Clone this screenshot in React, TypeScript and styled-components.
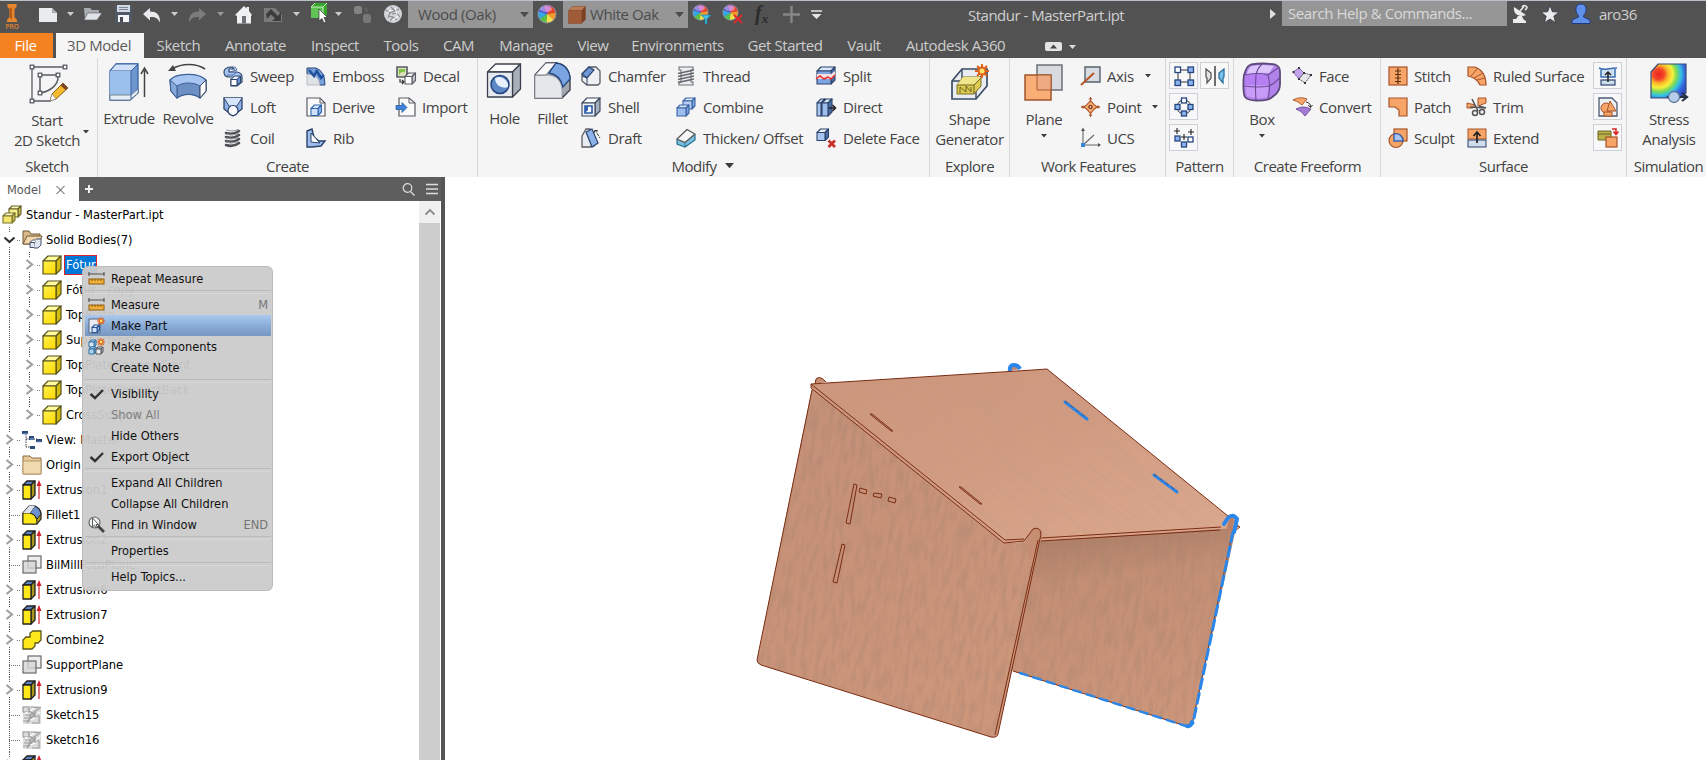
import React from 'react';
import styled, { createGlobalStyle } from 'styled-components';

const Global = createGlobalStyle`
  * { box-sizing: border-box; }
  body { margin: 0; background: #fff; overflow: hidden; }
  svg { display: block; flex: none; overflow: visible; }
`;

const UI_FONT = `'Open Sans', 'Noto Sans', sans-serif`;
const TREE_FONT = `'DejaVu Sans Condensed', 'DejaVu Sans', sans-serif`;

/* ---------- palette ---------- */
const NAVY = '#2c436b';
const SKY = '#a9c6f2';
const MID = '#6f97d6';
const STEEL = '#4d6fa8';
const ORANGE = '#f7a468';
const RUST = '#a8542a';
const GREY = '#585c63';

/* ---------- layout ---------- */
const Window = styled.div`
  width: 1706px;
  height: 760px;
  display: flex;
  flex-direction: column;
  font-family: ${UI_FONT};
  background: #fff;
  overflow: hidden;
`;

const TitleBar = styled.header`
  height: 33px;
  flex: none;
  display: flex;
  align-items: flex-start;
  background: #525252;
  border-top: 1px solid #b9c0ca;
`;

const Slot = styled.div<{ $w: number; $ml?: number; $mt?: number }>`
  flex: none;
  width: ${p => p.$w}px;
  margin-left: ${p => p.$ml ?? 0}px;
  margin-top: ${p => p.$mt ?? 0}px;
`;

const Combo = styled.div<{ $ml: number }>`
  flex: none;
  width: 125px;
  height: 27px;
  margin-left: ${p => p.$ml}px;
  padding: 0 4px 0 5px;
  display: flex;
  align-items: center;
  background: #969696;
  color: #4c4c4c;
  font-size: 15px;
  letter-spacing: -0.4px;
  white-space: nowrap;
`;

const ComboText = styled.span<{ $pl: number }>`
  flex: 1;
  padding-left: ${p => p.$pl}px;
  padding-bottom: 1px;
`;

const DocTitle = styled.div`
  flex: none;
  width: 290px;
  margin-left: 146px;
  margin-top: 3px;
  line-height: 22px;
  font-size: 15px;
  letter-spacing: -0.5px;
  color: #cfcfcf;
  white-space: nowrap;
`;

const SearchBox = styled.div`
  flex: none;
  width: 225px;
  height: 25px;
  margin-left: 6px;
  padding-left: 6px;
  line-height: 24px;
  background: #969696;
  color: #d9d9d9;
  font-size: 15px;
  letter-spacing: -0.42px;
  white-space: nowrap;
`;

const UserName = styled.div`
  margin: 2px 0 0 8px;
  line-height: 22px;
  font-size: 15px;
  letter-spacing: -0.6px;
  color: #cfcfcf;
`;

const TabBar = styled.nav`
  height: 25px;
  flex: none;
  display: flex;
  background: #525252;
`;

const Tab = styled.div<{ $w: number; $kind?: 'file' | 'active' }>`
  flex: none;
  width: ${p => p.$w}px;
  margin-right: ${p => (p.$kind === 'file' ? 3 : 0)}px;
  padding-right: ${p => (p.$kind ? 2 : 0)}px;
  line-height: 25px;
  text-align: center;
  font-size: 15px;
  letter-spacing: -0.4px;
  white-space: nowrap;
  color: ${p => (p.$kind === 'file' ? '#fff' : p.$kind === 'active' ? '#5a5a5a' : '#cdcdcd')};
  background: ${p => (p.$kind === 'file' ? '#f58220' : p.$kind === 'active' ? '#f5f5f5' : 'transparent')};
`;

const Ribbon = styled.section`
  height: 119px;
  flex: none;
  display: flex;
  background: #f5f5f5;
  color: #434343;
  font-size: 15px;
  letter-spacing: -0.39px;
`;

const Group = styled.div<{ $w: number }>`
  flex: none;
  width: ${p => p.$w}px;
  display: flex;
  flex-direction: column;
  border-right: 1px solid #d8d8d8;
  &:last-child { border-right: none; }
`;

const GroupBody = styled.div<{ $pl?: number }>`
  height: 98px;
  display: flex;
  padding-left: ${p => p.$pl ?? 0}px;
`;

const GroupLabel = styled.div<{ $shift?: number }>`
  height: 21px;
  display: flex;
  justify-content: center;
  align-items: center;
  gap: 8px;
  line-height: 20px;
  letter-spacing: -0.5px;
  padding-bottom: 2px;
  padding-left: ${p => Math.max(p.$shift ?? 0, 0)}px;
  padding-right: ${p => Math.max(-(p.$shift ?? 0), 0)}px;
  white-space: nowrap;
`;

const Big = styled.div<{ $w: number }>`
  flex: none;
  width: ${p => p.$w}px;
  padding-top: 4px;
  display: flex;
  flex-direction: column;
  align-items: center;
  text-align: center;
  line-height: 20px;
  white-space: nowrap;
`;

const BigLabel = styled.div<{ $mt?: number }>`
  margin-top: ${p => p.$mt ?? 6}px;
  margin-bottom: 5px;
`;

const BesideArrow = styled.div`
  width: 12px;
  padding-top: 72px;
`;

const Column = styled.div<{ $w: number; $ml?: number }>`
  flex: none;
  width: ${p => p.$w}px;
  margin-left: ${p => p.$ml ?? 0}px;
  padding-top: 2px;
`;

const Command = styled.div<{ $gap?: number }>`
  height: 31px;
  display: flex;
  align-items: center;
  gap: ${p => p.$gap ?? 7}px;
  white-space: nowrap;
`;

const CommandArrow = styled.span<{ $ml: number }>`
  margin-left: ${p => p.$ml}px;
`;

const ToolGrid = styled.div<{ $cols: number; $ml: number }>`
  display: grid;
  grid-template-columns: repeat(${p => p.$cols}, 29px);
  grid-auto-rows: 27px;
  gap: 4px 2px;
  align-content: start;
  padding-top: 4px;
  margin-left: ${p => p.$ml}px;
`;

const Tool = styled.div`
  display: flex;
  align-items: center;
  justify-content: center;
  border: 1px solid #cdd0d6;
  background: #f8f8f9;
`;

const Workspace = styled.main`
  flex: 1;
  min-height: 0;
  display: flex;
`;

const Browser = styled.aside`
  flex: none;
  width: 445px;
  display: flex;
  flex-direction: column;
  border-right: 4px solid #555;
`;

const BrowserHead = styled.div`
  height: 24px;
  flex: none;
  display: flex;
  align-items: center;
  background: #5e5e5e;
`;

const BrowserTab = styled.div`
  width: 79px;
  height: 24px;
  padding-left: 7px;
  display: flex;
  align-items: center;
  gap: 15px;
  background: #fff;
  color: #5a5a5a;
  font: 12.7px ${TREE_FONT};
  font-stretch: condensed;
`;

const HeadTools = styled.div`
  flex: 1;
  display: flex;
  align-items: center;
  justify-content: flex-end;
  gap: 11px;
  padding-right: 2px;
`;

const BrowserBody = styled.div`
  flex: 1;
  min-height: 0;
  display: flex;
  padding-right: 1px;
`;

const Tree = styled.div`
  flex: 1;
  overflow: hidden;
  padding-top: 1px;
  color: #000;
  font: 12.8px ${TREE_FONT};
  font-stretch: condensed;
`;

const TreeRow = styled.div`
  height: 25px;
  display: flex;
  align-items: center;
  white-space: nowrap;
`;

const TreeIcon = styled.span`
  flex: none;
  width: 20px;
  margin-left: 2px;
`;

const TreeText = styled.span<{ $selected?: boolean }>`
  margin-left: 2px;
  padding: 0 0 0 1px;
  border: 1px solid ${p => (p.$selected ? '#e0202c' : 'transparent')};
  background: ${p => (p.$selected ? '#0078d7' : 'transparent')};
  color: ${p => (p.$selected ? '#fff' : '#000')};
  height: 20px;
  line-height: 18px;
`;

const ScrollBar = styled.div`
  flex: none;
  width: 21px;
  display: flex;
  flex-direction: column;
  background: #cdcdcd;
`;

const ScrollUp = styled.div`
  height: 22px;
  display: flex;
  align-items: center;
  justify-content: center;
  background: #f0f0f0;
`;

const Canvas = styled.div`
  flex: 1;
  background: #fff;
  overflow: hidden;
`;

const Menu = styled.div`
  position: absolute;
  left: 82px;
  top: 266px;
  width: 191px;
  padding: 1px 1px 3px 2px;
  border: 1px solid rgba(184, 184, 184, 0.9);
  border-radius: 6px;
  background: rgba(203, 203, 203, 0.95);
  font: 12.7px ${TREE_FONT};
  font-stretch: condensed;
`;

const MenuItem = styled.div<{ $hot?: boolean; $off?: boolean }>`
  height: 21px;
  padding: 0 3px 0 3px;
  display: flex;
  align-items: center;
  color: ${p => (p.$off ? '#808080' : '#111')};
  background: ${p => (p.$hot ? 'linear-gradient(#abc9ee, #87aad6 55%, #7797c0)' : 'transparent')};
`;

const MenuIcon = styled.span`
  flex: none;
  width: 23px;
`;

const MenuText = styled.span`
  flex: 1;
  white-space: nowrap;
`;

const Shortcut = styled.span`
  color: #757575;
`;

const Divider = styled.div`
  height: 5px;
  padding-top: 1px;
  &::after { content: ''; display: block; height: 2px; border-top: 1px solid #bbb; border-bottom: 1px solid #d6d6d6; }
`;

/* ---------- icon helpers ---------- */
const Icon = ({ s = 20, h, children }: { s?: number; h?: number; children: React.ReactNode }) => (
  <svg width={s} height={h ?? s} viewBox={`0 0 ${s} ${h ?? s}`} fill="none">{children}</svg>
);

const Caret = ({ color = '#3c3c3c', w = 7 }: { color?: string; w?: number }) => (
  <svg width={w} height={w * 0.57} viewBox="0 0 7 4"><path d="M0 0H7L3.5 4Z" fill={color} /></svg>
);

type CubeProps = { x?: number; y?: number; w: number; h: number; d: number; f?: string; t?: string; r?: string; k?: string; sw?: number };
const Cube = ({ x = 0, y = 0, w, h, d, f = SKY, t = '#dbe8fb', r = STEEL, k = NAVY, sw = 1.1 }: CubeProps) => (
  <g stroke={k} strokeWidth={sw} strokeLinejoin="round">
    <path d={`M${x} ${y + d}L${x + d} ${y}H${x + w + d}L${x + w} ${y + d}Z`} fill={t} />
    <path d={`M${x + w} ${y + d}L${x + w + d} ${y}V${y + h}L${x + w} ${y + h + d}Z`} fill={r} />
    <path d={`M${x} ${y + d}H${x + w}V${y + h + d}H${x}Z`} fill={f} />
  </g>
);

const Burst = ({ x, y, r }: { x: number; y: number; r: number }) => (
  <g stroke="#e0601a" strokeWidth={r * 0.28}>
    {[0, 45, 90, 135].map(a => (
      <path key={a} d={`M${x - r} ${y}H${x + r}`} transform={`rotate(${a} ${x} ${y})`} />
    ))}
    <circle cx={x} cy={y} r={r * 0.5} fill="#ffe36b" />
  </g>
);

/* ---------- quick access icons ---------- */
const Logo = () => (
  <Icon s={24} h={28}>
    <path d="M7.500 2H16.500V5L14.500 7V15L17 18V20H7V18L9.500 15V7L7.500 5Z" fill="#e8862e" />
    <path d="M9.500 7L12 5V18L9.500 15Z" fill="#b35c14" />
    <text x="5.6" y="26.8" fontSize="6.5" fontWeight="600" fontFamily="Open Sans" fill="#e8862e">PRO</text>
  </Icon>
);
const NewDoc = () => <Icon><path d="M1 3H14L19 8V17H1Z" fill="#e9ebee" /><path d="M14 3V8H19Z" fill="#a8acb2" /></Icon>;
const OpenDoc = () => (
  <Icon><path d="M1 4H7L9 6H16V9H6L2 15Z" fill="#a8abb0" /><path d="M5 9H19L14 16H1Z" fill="#dfe3e8" stroke="#5a5f66" strokeWidth=".6" /></Icon>
);
const Save = () => (
  <Icon><path d="M1 1H18V19H1Z" fill="#4f5968" /><path d="M3 1H16V8H3Z" fill="#d2dae4" /><path d="M5 3.5H14M5 5.5H14" stroke="#7b8796" /><path d="M4 11H15V18H4Z" fill="#f3f5f7" /><path d="M6 13H9V18H6Z" fill="#444b55" /></Icon>
);
const Undo = () => (
  <Icon s={18}><path d="M0 7L7 1V4.500C13 4.500 17.500 7.500 17 15.500C15 11 12 9.600 7 10V13.500Z" fill="#e9ebee" /></Icon>
);
const Redo = () => <Icon s={18}><path d="M17 7L10 1V4.500C4 4.500 -.5 7.500 0 15.500C2 11 5 9.600 10 10V13.500Z" fill="#7c7c7c" /></Icon>;
const Home = () => (
  <Icon s={18}><path d="M0 9L9 0L11.5 2.5V1H14V5L17 9L16 10V17.5H2V10Z" fill="#eef0f3" /><path d="M7 10H11V17.5H7Z" fill="#6c7077" /></Icon>
);
const Return = () => (
  <Icon><path d="M1 4H12L19 11V18H1Z" fill="#7b7b7b" /><path d="M3 10L8 5L15 12L18 8V17H9L12 14.500L8 10.500L4 15Z" fill="#3c3c3c" /></Icon>
);
const SelectTool = () => (
  <Icon><path d="M1 4L5 0H17V12L13 15H1Z" fill="#37a52e" /><path d="M1 4H13V15H1Z" fill="#5fc455" /><path d="M1 4L5 0M13 4L17 0M1 4H13V15" stroke="#c4f0bd" /><path d="M9 6V18L12 15.5L14 20L16 19L14 14.5H17.5Z" fill="#fff" stroke="#333" strokeWidth=".7" /></Icon>
);
const Links = () => (
  <Icon><rect x="1" y="2" width="8" height="8" rx="2.500" fill="#838383" /><rect x="10" y="10" width="8" height="9" rx="2.500" fill="#777" /><path d="M11 5H14V8" stroke="#6d6d6d" /></Icon>
);
const Sphere = () => (
  <Icon>
    <circle cx="10" cy="10" r="9" fill="#d3d6d8" />
    <path d="M3 6L7 9L5 14M8 3L12 7L16 5M9 10L14 9L17 13M7 17L10 13L14 16M7 9L12 7M5 12L10 13" stroke="#85898c" strokeWidth="1.1" />
    <path d="M4 9L8 6M12 4L14 10M10 16L15 12" stroke="#fff" />
  </Icon>
);
const Wheel = ({ s = 20 }: { s?: number }) => (
  <svg width={s} height={s} viewBox="-10 -10 20 20">
    {['#e8452f', '#f29a2c', '#f4e14a', '#58c04a', '#35a6e6', '#5a4fd0', '#c34fc2'].map((c, i) => {
      const a = ((i * 51.43 - 60) * Math.PI) / 180;
      const b = (((i + 1) * 51.43 - 58) * Math.PI) / 180;
      return <path key={c} d={`M0 0L${9 * Math.cos(a)} ${9 * Math.sin(a)}A9 9 0 0 1 ${9 * Math.cos(b)} ${9 * Math.sin(b)}Z`} fill={c} />;
    })}
    <circle r="9" fill="none" stroke="#8a8f9c" strokeWidth="1" />
    <ellipse cx="-1" cy="-5" rx="6" ry="3" fill="#fff" opacity=".35" />
  </svg>
);
const OakCube = () => <Icon s={18}><Cube x={.5} y={.5} w={13} h={13} d={4} f="#a05a38" t="#bd7b54" r="#7c3f24" k="#8a5136" sw={.6} /></Icon>;
const WheelAdjust = () => (
  <Icon><svg width="17" height="17"><Wheel s={17} /></svg><path d="M9 11H19L15 15V20H13V15Z" fill="#45c3ea" stroke="#136f94" strokeWidth=".6" /></Icon>
);
const WheelClear = () => (
  <Icon><svg width="17" height="17"><Wheel s={17} /></svg><path d="M12 11L20 19M20 11L12 19" stroke="#e4262c" strokeWidth="1.8" /></Icon>
);
const Plus = ({ c, s, w }: { c: string; s: number; w: number }) => (
  <Icon s={s}><path d={`M${s / 2} 0V${s}M0 ${s / 2}H${s}`} stroke={c} strokeWidth={w} /></Icon>
);
const More = () => <Icon s={11} h={10}><path d="M0 1H11" stroke="#e6e6e6" strokeWidth="1.5" /><path d="M.5 4H10.500L5.500 9Z" fill="#e6e6e6" /></Icon>;
const Fx = styled.div`
  font: italic bold 20px/22px 'Liberation Serif', serif;
  color: #2c2c2c;
  white-space: nowrap;
  sub { font-size: 13px; line-height: 0; vertical-align: -3px; }
`;
const Dish = () => (
  <Icon><path d="M3 3C2 10 8 14 15 11Z" fill="#ececec" /><path d="M9 7L13 2.500" stroke="#ececec" strokeWidth="1.600" /><path d="M11 3Q13 0 16 3Q16 5 14 6" stroke="#ececec" strokeWidth="1.600" /><path d="M7 12L5 15H2V19H15V17Q12 16 11 12Z" fill="#ececec" /></Icon>
);
const Star = () => <Icon><path d="M10 1.500L12.400 7.800L19 8.100L13.800 12.200L15.600 18.700L10 15L4.400 18.700L6.200 12.200L1 8.100L7.600 7.800Z" fill="#e9ebee" stroke="#33363b" strokeWidth=".8" /></Icon>;
const User = () => (
  <Icon><path d="M10 0C14 0 15.500 3 15 6.500C14.700 9 13.500 10.500 12.500 11.500V13L19 16V19.500H1V16L7.500 13V11.500C6.500 10.500 5.300 9 5 6.500C4.500 3 6 0 10 0Z" fill="#5f8fe6" stroke="#1e3d80" /></Icon>
);

/* ---------- ribbon icons, large ---------- */
const StartSketch = () => (
  <Icon s={40}>
    <path d="M5 5H38M5 5V39H24" stroke={GREY} strokeWidth="1.3" />
    <path d="M13 13H31V15C31 22 25 29 13 31Z" stroke={GREY} strokeWidth="1.500" />
    {[[5, 5], [38, 5], [5, 39], [13, 13], [31, 13], [13, 31]].map(([x, y]) => (
      <rect key={`${x}-${y}`} x={x - 1.8} y={y - 1.8} width="3.600" height="3.600" fill="#fff" stroke={GREY} strokeWidth="1.300" />
    ))}
    <path d="M36 21L41 26L29 37L23 39L25 32Z" fill="#f4b92f" stroke="#8c5f18" />
    <path d="M25 32L29 37L23 39Z" fill="#fff" stroke="#8a8a8a" strokeWidth=".7" />
    <path d="M36 21L41 26L38.500 28L33.500 23.500Z" fill="#7b4a2a" />
  </Icon>
);
const Extrude = () => (
  <Icon s={40}>
    <path d="M1 9L7 2H29V31L21 38H1Z" fill="#6f97cf" stroke="#3862a3" strokeWidth="1.300" />
    <path d="M1 9L7 2H29L22 9Z" fill="#cfe0f8" stroke="#3862a3" /><path d="M1 9H22V33H1Z" fill="#9cc0ec" />
    <path d="M1 33H22L29 27V31L21 38H1Z" fill="#e8eef6" stroke="#5f6f87" strokeWidth=".8" />
    <path d="M22 9V37" stroke="#3862a3" /><path d="M35.500 35V8M32 12L35.500 6L39 12" stroke="#444" strokeWidth="1.500" />
  </Icon>
);
const Revolve = () => (
  <Icon s={40}>
    <path d="M2 18C8 11 30 10 38 18V29L32 36C26 31 15 31 9 36L3 29Z" fill={SKY} stroke="#3d5f96" strokeWidth="1.400" />
    <path d="M9 24C15 20 26 20 32 24V36C26 31 15 31 9 36Z" fill="#6c8fc4" stroke="#3d5f96" />
    <path d="M2 18L9 24V36L3 29Z" fill="#87a8da" stroke="#3d5f96" /><path d="M38 18L32 24V36L38 29Z" fill="#fff" stroke="#33415c" />
    <path d="M37 7C28 1 14 1 4 7" stroke="#444" strokeWidth="1.600" /><path d="M0 9L5 3L8 9Z" fill="#444" />
  </Icon>
);
const Hole = () => (
  <Icon s={38}><Cube x={1.5} y={2} w={25} h={25} d={8} f="#e6e9ed" t="#fbfbfc" r="#a9afb8" k="#3c414b" sw={1.3} /><circle cx="14" cy="22.500" r="9" fill="#5c88c8" stroke="#24457e" strokeWidth="1.500" /><path d="M9 16A9 9 0 0 1 22 25A9.500 9.500 0 0 1 9 16Z" fill="#e8f1fd" /></Icon>
);
const Fillet = () => (
  <Icon s={38}>
    <path d="M1 13L12 1H22C32 2 36 10 36 18V28L28 36H1Z" fill="#a3a8b0" stroke="#3c414b" strokeWidth="1.400" />
    <path d="M1 13H12C22 13 28 19 28 28V36H1Z" fill="#e5e7ea" stroke="#8f949c" strokeWidth=".7" />
    <path d="M12 1L1 13H12L22 1Z" fill="#fafafa" stroke="#555b66" strokeWidth=".8" />
    <path d="M15 11L22 1C32 2 36 10 36 17L29 25C27 17 22 12 15 11Z" fill="#7ba5e0" stroke="#24457e" strokeWidth="1.300" />
  </Icon>
);
const ShapeGen = () => (
  <Icon s={40}>
    <path d="M2 19L12 7H37V24L26 37H2Z" fill="#e9edf2" stroke="#3b4c66" strokeWidth="1.700" />
    <path d="M2 19H26V37M26 19L37 9M12 7V19" stroke="#3b4c66" strokeWidth="1.400" />
    <path d="M7 23L13 15H31V24L24 32H7Z" fill="#dccb52" stroke="#7c6f22" /><path d="M7 23L13 15H31L24 23Z" fill="#f0e58c" /><path d="M7 23H24V32M24 23L31 16M10 31V25L16 30V24L21 30V25" stroke="#6d6220" />
    <Burst x={32} y={9} r={7} />
  </Icon>
);
const Plane = () => (
  <Icon s={40}><path d="M13 3H38V28H13Z" fill="#d7dade" stroke="#6b6f76" strokeWidth="1.500" /><path d="M1 13H27V38H1Z" fill="#f9ae76" stroke="#a0542c" strokeWidth="1.500" /><path d="M13 13H27V28H13Z" fill="#eeaa80" stroke="#a0542c" strokeWidth=".9" /></Icon>
);
const FreeBox = () => (
  <Icon s={40}>
    <path d="M9 2.500Q21 .5 33 2.500Q38 4 38 10V22Q38 28 34 32L29 36Q25 39 14 38.500Q6 38.500 3 35Q1 32 1.500 18Q1.500 13 3.500 9Q5 4 9 2.500Z" fill="#b183ea" stroke="#5e4a7a" strokeWidth="1.800" />
    <path d="M10 4Q21 2 32 4L27 11Q15 10 5 12Q6 6 10 4Z" fill="#dcc5fa" />
    <path d="M5 14Q14 12 25 14Q28 24 25 35Q14 38 5 34Q2 26 5 14Z" fill="#c79cf8" />
    <path d="M5 14Q14 12 25 14L26 23H3Z" fill="#a866ee" opacity=".55" />
    <path d="M20 2Q15 7 14 13Q13 26 14 38M2 24Q16 26 27 24Q34 21 38 15M26 13Q29 24 26 37M3 13Q16 10 26 13L36 6" stroke="#6c4a96" strokeWidth="1.100" />
  </Icon>
);
const Stress = () => (
  <Icon s={40}>
    <defs>
      <radialGradient id="heat" cx=".22" cy=".3" r=".95">
        <stop offset="0" stopColor="#e8261c" /><stop offset=".17" stopColor="#f4472a" /><stop offset=".28" stopColor="#fbb32a" /><stop offset=".42" stopColor="#f7f13c" /><stop offset=".54" stopColor="#7ed957" /><stop offset=".66" stopColor="#35c4e0" /><stop offset=".8" stopColor="#3565e0" /><stop offset="1" stopColor="#2a3fb0" />
      </radialGradient>
    </defs>
    <path d="M2 10L9 2H37V31L31 36H2Z" fill="url(#heat)" stroke="#3b4a78" strokeWidth="1.200" />
    <path d="M18 35H37M33 31L38 35L33 39" stroke="#263246" strokeWidth="2.200" /><circle cx="25" cy="35" r="5.500" fill="#b7cdec" stroke="#5d7398" strokeWidth="1.300" />
  </Icon>
);

/* ---------- ribbon icons, small ---------- */
const small: Record<string, React.ReactNode> = {
  Sweep: <><path d="M1 6Q1 1 9 1L11 3H6V6H14Q19 7 19 11V16L14 20H8V13H12V11H6Q1 11 1 6Z" fill={SKY} stroke={NAVY} strokeWidth="1.200" /><path d="M9 1L12 1L14 4L6 6M14 6L10 9L4 9" stroke={STEEL} /><Cube x={8} y={10} w={6} h={6} d={3.5} f="#fff" t="#e7effb" r={MID} sw={1} /></>,
  Loft: <><path d="M1 1H19V12L10 19L1 12Z" fill="#8fb3e8" stroke={NAVY} strokeWidth="1.300" /><path d="M1 1H19L15 8H5Z" fill="#d5e4fa" /><path d="M1 1L6 9M19 1L14 9" stroke={NAVY} /><circle cx="10" cy="13.500" r="5" fill="#fff" stroke={NAVY} strokeWidth="1.200" /></>,
  Coil: <g strokeLinecap="round">{[3, 7, 11, 15].map(y => <g key={y}><path d={`M3 ${y + 2}Q10 ${y + 4.500} 16 ${y}`} stroke="#4c4f54" strokeWidth="2.600" /><path d={`M4 ${y - 1}Q10 ${y + 1} 15 ${y - 1.500}`} stroke="#9a9da2" strokeWidth="1.300" /></g>)}</g>,
  Emboss: <><path d="M1 2H10Q19 5 19 19H14Q12 8 1 8Z" fill="#76a0de" stroke={NAVY} /><path d="M1 8Q13 8 14 19H1Z" fill="#dfe2e7" stroke="#a6abb5" strokeWidth=".7" /><path d="M3 4L8 10L10 6M10 4L15 12L18 9" stroke="#1f4f9c" strokeWidth="2.400" /></>,
  Derive: <><path d="M1 1H14L19 6V19H1Z" fill="#fafafa" stroke={GREY} strokeWidth="1.200" /><path d="M14 1V6H19" stroke={GREY} /><Cube x={5} y={8} w={7} h={7} d={3.5} k="#2f66ad" f="#cfe0f8" r="#8db2ea" /></>,
  Rib: <><path d="M1 3L6 1L8 9L13 13L19 13L15 18L6 19H1Z" fill="#9dbdee" stroke={NAVY} strokeWidth="1.400" /><path d="M5 5V14L14 15Z" fill="#fff" stroke={NAVY} /></>,
  Decal: <><path d="M1 1H11V11H1Z" fill="#d8dfb8" stroke={GREY} strokeWidth="1.600" /><path d="M3 3H9V6Q5 5 3 9Z" fill="#7ec342" /><Cube x={9} y={7} w={7} h={7.500} d={3.500} f="#fff" t="#eee" r="#c4c8ce" k={GREY} /><path d="M4 13V16H8M6 14L8 16L6 18" stroke="#333" strokeWidth="1.200" /></>,
  Import: <><path d="M3 1H13L19 6V19H3Z" fill="#fafafa" stroke={GREY} strokeWidth="1.200" /><path d="M13 1V6H19" stroke={GREY} /><path d="M0 8.500H6V5.500L11 10.500L6 15.500V12.500H0Z" fill="#3f83da" stroke="#1f5194" strokeWidth=".7" /></>,
  Chamfer: <><path d="M1 8L8 1H15L19 5V17L17 19H6L1 15Z" fill="#eef0f3" stroke={GREY} strokeWidth="1.300" /><path d="M1 8L8 1L13 4L6 12Z" fill={MID} stroke={NAVY} strokeWidth="1.200" /><path d="M6 12V19M6 12L1 10" stroke={NAVY} /></>,
  Shell: <><Cube x={1} y={1} w={13} h={13} d={5} f="#eef1f5" t="#fff" r="#a6afbd" k="#39445a" /><path d="M4 9H11V16H4Z" fill="#fff" stroke="#2a56a0" strokeWidth="1.600" /><path d="M4 9V16L7 13V9Z" fill="#2f61b4" /></>,
  Draft: <><path d="M1 8L5 1H9L13 18L9 19H1Z" fill="#e7ebf1" stroke={GREY} strokeWidth="1.300" /><path d="M5 4L11 1L17 15L11 19Z" fill="#8db2ea" stroke={NAVY} strokeWidth="1.200" /><path d="M14 2L19 10M13 5L14 2L17 3" stroke="#333" strokeDasharray="3 1" /></>,
  Thread: <><path d="M3 1H17V4H15V16H17V19H3V16H5V4H3Z" fill="#eceef0" stroke="#6d7178" strokeWidth="1.100" />{[5, 8, 11, 14].map(y => <path key={y} d={`M2 ${y + 2.500}L18 ${y - 1}`} stroke="#63676e" strokeWidth="1.500" />)}</>,
  Combine: <><Cube x={7} y={1} w={9} h={8} d={3} f="#b9d0f5" r="#7ba5e0" k="#3b63a4" /><Cube x={1} y={8} w={9} h={8} d={3} f="#9dbdee" r="#7ba5e0" k="#3b63a4" /></>,
  Thicken: <><path d="M1 12L11 2L19 7V12L9 19L1 16Z" fill="#79c0e0" stroke="#2c7192" strokeWidth="1.200" /><path d="M1 11L11 1.500L19 6L9 14.500Z" fill="#f7f7f7" stroke="#555" strokeWidth="1.200" /><path d="M9 14.500V19" stroke="#2c7192" /></>,
  Split: <><Cube x={1} y={1} w={14} h={13} d={4} f="#7ea5e2" t="#dbe8fb" r={STEEL} /><path d="M1 8H15L19 5V10L15 13H1Z" fill="#f5dfe0" /><path d="M0 13L4 10L8 13L12 11L15 13L19 9" stroke="#e42a2a" strokeWidth="1.500" /></>,
  Direct: <><Cube x={1} y={2} w={4} h={13} d={4} k={NAVY} /><Cube x={6} y={2} w={6} h={13} d={4} f="#9dbdee" k={NAVY} /><path d="M13 11H19M16.500 8L19.500 11L16.500 14" stroke="#222" strokeWidth="1.600" /></>,
  DeleteFace: <><Cube x={1} y={1} w={8} h={8} d={3.500} f="#a9c6f2" t="#eaf1fc" k={NAVY} /><path d="M12.500 12.500L19 19M19 12.500L12.500 19" stroke="#c8302a" strokeWidth="2.800" /></>,
  Axis: <><path d="M4 1H19V16H4Z" fill="#d9dde3" stroke="#55606e" strokeWidth="1.400" /><path d="M0 19L13 7" stroke="#b4572a" strokeWidth="2" /></>,
  Point: <><path d="M9.500 0V20M0 10H19" stroke={RUST} /><path d="M9.500 3.500Q12 7 16 10Q12 12.500 9.500 16.500Q7 12.500 3 10Q7 7 9.500 3.500Z" fill="#f9ae76" stroke={RUST} strokeWidth="1.200" /><path d="M7.500 2.500L9.500 0L11.500 2.500ZM7.500 17.500L9.500 20L11.500 17.500ZM2.500 8L0 10L2.500 12ZM16.500 8L19 10L16.500 12Z" fill={RUST} /><circle cx="9.500" cy="10" r="2.300" fill="#8a4420" /><circle cx="9.500" cy="10" r=".8" fill="#fff" /></>,
  UCS: <><path d="M2 17V1M2 17H19M2 17L13 7" stroke="#666" strokeWidth="1.100" /><path d="M0 3L2 -.5L4 3ZM17 15L20 17L17 19Z" fill="#555" /><rect x="0" y="15" width="4" height="4" fill="#3a86d8" /></>,
  Face: <><path d="M0 6L6 2L11 7L6 13Z" fill="#c3a3ee" stroke="#7349a8" strokeDasharray="2 .6" /><path d="M6 13L11 7L18 9L12 17Z" fill="#e7e7ea" stroke={GREY} strokeDasharray="2 .6" /><path d="M-.5 6H1.500M5 13H7M10 7H12M17 9H19M11 17H13M5 2H7" stroke="#333" strokeWidth="2" /></>,
  Convert: <><path d="M0 3Q7 -1 14 2L9 8Q5 4 0 3Z" fill={ORANGE} stroke={RUST} strokeWidth=".9" /><path d="M3 12Q10 8 18 12L12 19Q9 14 3 12Z" fill="#a37bd6" stroke="#6c4a96" strokeWidth=".9" /><path d="M13 5Q18 6 17.500 10M15 8L17.500 10.500L19.500 8" stroke="#333" /></>,
  Stitch: <><rect x="1" y="1" width="18" height="18" fill={ORANGE} stroke={RUST} strokeWidth="1.200" /><path d="M10 2V18M7 5H13M7 8.500H13M7 12H13M7 15.500H13" stroke="#5f3010" strokeWidth="1.200" /></>,
  Patch: <path d="M1 1H19V19H11V13L7 10H1Z" fill={ORANGE} stroke={RUST} strokeWidth="1.200" />,
  Sculpt: <><rect x="6" y="1" width="13" height="12" fill={ORANGE} stroke={RUST} strokeWidth="1.200" /><circle cx="8" cy="12.500" r="7" fill={ORANGE} stroke={RUST} strokeWidth="1.200" /><path d="M6 6A7 7 0 0 1 15 13H6Z" fill="#a8c4f2" stroke="#3a62ad" strokeWidth="1.400" /></>,
  Ruled: <><path d="M1 1H8Q19 5 19 19H13Q10 12 1 10Z" fill={ORANGE} stroke={RUST} strokeWidth="1.200" /><path d="M4 10L11 2M7 12L16 7M10 14L18 12" stroke={RUST} /></>,
  Trim: <><path d="M11 1H19V6L11 9Z" fill={ORANGE} stroke={RUST} /><path d="M0 6L8 8L6 11H0Z" fill={ORANGE} stroke={RUST} /><path d="M5 2L11 14M3 10L19 11L12 9" stroke="#555" strokeWidth="1.600" /><circle cx="8" cy="16" r="2.500" stroke="#555" strokeWidth="1.500" /><circle cx="15" cy="15" r="2.500" stroke="#555" strokeWidth="1.500" /></>,
  Extend: <><rect x="1" y="1" width="18" height="10" fill={ORANGE} stroke={RUST} /><rect x="1" y="12" width="18" height="7" fill="#cfdcec" stroke={NAVY} /><path d="M10 15V4M6.500 8L10 4L13.500 8" stroke="#222" strokeWidth="1.700" /></>,
  PatRect: <><path d="M4 4H16V16H4Z" stroke="#333" /><rect x="1" y="1" width="5.500" height="5.500" fill="#fff" stroke="#24457e" strokeWidth="1.300" />{[[14, 1], [1, 14], [14, 14]].map(([x, y]) => <rect key={`${x}${y}`} x={x} y={y} width="5.500" height="5.500" fill="#8fb5f0" stroke="#24457e" strokeWidth="1.300" />)}</>,
  PatCirc: <><circle cx="10" cy="10" r="7" stroke="#333" /><rect x="7.500" y="1" width="5" height="5" fill="#fff" stroke="#24457e" strokeWidth="1.300" />{[[1, 7.500], [14, 7.500], [7.500, 14]].map(([x, y]) => <rect key={`${x}${y}`} x={x} y={y} width="5" height="5" fill="#8fb5f0" stroke="#24457e" strokeWidth="1.300" />)}</>,
  Mirror: <><path d="M1 3L6 7V12L2 17V12L1 11Z" fill="#e4e6e9" stroke="#555" strokeWidth="1.300" /><path d="M19 3L14 7V12L18 17V12L19 11Z" fill="#7cc4ec" stroke="#2a6f9e" strokeWidth="1.300" /><path d="M10 0V20" stroke="#222" strokeWidth="1.300" /></>,
  PatSketch: <><path d="M3 0V6M0 3H6M17 1V7M14 4H20M10 6V12M7 9H13" stroke="#222" strokeWidth="1.100" />{[[1, 8], [7.500, 14]].map(([x, y]) => <rect key={x} x={x} y={y} width="5" height="5" fill="#8fb5f0" stroke="#24457e" strokeWidth="1.300" />)}<rect x="14" y="9" width="5" height="5" fill="#fff" stroke="#24457e" strokeWidth="1.300" /></>,
  Thick2: <><path d="M1 2Q5 4 10 3T19 2M3 3V11H17V3" stroke="#3b6db0" strokeWidth="1.500" fill="#cfe0f5" /><rect x="3" y="14" width="14" height="5" fill="#cfdcec" stroke={NAVY} strokeWidth="1.200" /><path d="M10 16V6M7 9L10 6L13 9" stroke="#222" strokeWidth="1.500" /></>,
  Replace: <><path d="M1 1H14L19 6V19H1Z" fill="#eceff3" stroke="#4c5a70" strokeWidth="1.300" /><circle cx="8" cy="11" r="5" fill={ORANGE} stroke={RUST} /><path d="M12 4L18 14H9Z" fill={ORANGE} stroke={RUST} /><rect x="6" y="15" width="8" height="4" fill={ORANGE} stroke={RUST} /></>,
  Copy: <><path d="M0 3H13V12H0Z" fill="#b9b14a" stroke="#6d6826" /><path d="M0 6H13" stroke="#6d6826" /><rect x="8" y="9" width="11" height="10" fill={ORANGE} stroke={RUST} strokeWidth="1.200" /><path d="M14 1H18V5M15.500 3.500L18 6.500L20.500 3.500" stroke="#d92020" strokeWidth="1.500" /></>,
};
const Sm = ({ n }: { n: string }) => <Icon>{small[n]}</Icon>;

const Cmd = ({ icon, label, arrow, gap }: { icon: string; label: string; arrow?: number; gap?: number }) => (
  <Command $gap={gap}>
    <Sm n={icon} />
    <span>{label}</span>
    {arrow !== undefined && <CommandArrow $ml={arrow}><Caret w={6} /></CommandArrow>}
  </Command>
);

/* ---------- browser tree icons ---------- */
const Y = '#ffe81a';
const treeIcons: Record<string, React.ReactNode> = {
  part: <><Cube x={7} y={1} w={9} h={8} d={3} f="#f8f08a" t="#fdfac4" r="#c9bf4a" k="#66602a" /><Cube x={1} y={8} w={9} h={7} d={3} f="#f2e66c" t="#fdfac4" r="#c9bf4a" k="#77722f" /></>,
  bodies: <><path d="M1 1H7L9 4H18V14H1Z" fill="#d8b98b" stroke="#6f5836" /><path d="M1 14L5 6H20L17 14Z" fill="#f0d7ae" stroke="#6f5836" /><Cube x={8} y={10} w={5} h={5} d={2.500} f="#e0e6f1" t="#fff" r="#8f9ab0" k="#44506a" sw={1} /><path d="M14 9H19V15L16 18H12" fill="#dfe5f0" stroke="#44506a" /></>,
  body: (
    <>
      <defs><linearGradient id="bodyFace" x1="0" y1="0" x2="1" y2="1"><stop offset="0" stopColor="#fff250" /><stop offset="1" stopColor="#ffd800" /></linearGradient></defs>
      <Cube x={1} y={1} w={13} h={13} d={5} f="url(#bodyFace)" t="#fffa9c" r="#d3bd12" k="#57511c" sw={1.2} />
    </>
  ),
  view: <g><path d="M4 4V17H10M4 9H15" stroke="#333" strokeDasharray="1.500 1" /><path d="M0 1H6V4H0ZM7 6H12V10H7ZM14 9H20V12H14ZM8 16H13V19H8Z" fill="#2c4a78" /><path d="M1 4H6M8 9H12M15 12H19" stroke="#8fb0e0" /></g>,
  folder: <><path d="M1 1H8L10 3H19V19H1Z" fill="#e6c898" stroke="#8a7148" /><path d="M1 6H19V19H1Z" fill="#f1d9b0" stroke="#b79a6a" /></>,
  extrusion: <><Cube x={1} y={1} w={8} h={14} d={4} f={Y} t="#5d83c4" r="#a8971c" k="#222" sw={1.3} /><path d="M17 19V4" stroke="#d3202a" strokeWidth="1.200" /><path d="M14.500 6L17 0L19.500 6Z" fill="#d3202a" /></>,
  fillet: <><path d="M1 8L7 1H13Q19 4 19 9V14L15 19H1Z" fill="#a8971c" stroke="#222" strokeWidth="1.200" /><path d="M1 8H8Q15 9 15 19H1Z" fill={Y} stroke="#222" /><path d="M8 8L13 1Q19 4 19 9L15 14Q13 9 8 8Z" fill="#6d92cf" stroke="#222" /><path d="M1 8L7 1H13L8 8Z" fill="#dde3ee" /></>,
  plane: <><rect x="6" y="1" width="13" height="12" fill="#ededed" stroke="#6a6a6a" strokeWidth="1.200" /><rect x="1" y="6" width="13" height="12" fill="#d4d4d4" fillOpacity=".8" stroke="#6a6a6a" strokeWidth="1.200" /></>,
  combine: <path d="M8 3L11 1H19V10L16 13H13V16L10 19H1V10L4 7H8Z" fill={Y} stroke="#5c551c" strokeWidth="1.300" />,
  sketch: <><path d="M1 1H19V19H1Z" fill="#dcdcdc" /><path d="M1 2H7V7H1ZM3 10H8V13H2M9 2L18 3L9 9H17M13 6V14M1 16H6L9 11H17V18H10M6 4L12 10L5 18" stroke="#9d9d9d" strokeWidth="1.200" /><path d="M8 6L12 3M14 10L18 7M8 15L14 13M3 8H6" stroke="#fff" strokeWidth="1.300" /></>,
};

type RailProps = { chevron?: 'open' | 'closed'; to?: number; dash?: boolean };
const Rail = ({ chevron, to = 25, dash = true }: RailProps) => (
  <svg width="20" height="25" viewBox="0 0 20 25" fill="none">
    <path d={`M9.500 0V${to}`} stroke="#555" strokeDasharray="1 1" />
    {dash && <path d="M9 13.500H20" stroke="#777" strokeDasharray="1 1" />}
    {chevron && <rect x="3" y="6" width="14" height="13" fill="#fff" />}
    {chevron === 'closed' && <path d="M6.500 8L12 12.500L6.500 17" stroke="#a0a0a0" strokeWidth="2.200" />}
    {chevron === 'open' && <path d="M4.500 10.500L9.500 15L14.500 10.500" stroke="#333" strokeWidth="2.200" />}
  </svg>
);

const bodies = ['Fótur', 'Fótur - copy', 'TopPlate', 'SupportPost', 'TopPlateConnectFront', 'TopPlateConnectBack', 'CrossSupport'];
const features: [string, string, boolean][] = [
  ['view', 'View: Master', true],
  ['folder', 'Origin', true],
  ['extrusion', 'Extrusion1', true],
  ['fillet', 'Fillet1', false],
  ['extrusion', 'Extrusion2', true],
  ['plane', 'BilMillFotaPlane', false],
  ['extrusion', 'Extrusion6', true],
  ['extrusion', 'Extrusion7', true],
  ['combine', 'Combine2', true],
  ['plane', 'SupportPlane', false],
  ['extrusion', 'Extrusion9', true],
  ['sketch', 'Sketch15', false],
  ['sketch', 'Sketch16', false],
  ['extrusion', '', true],
];

/* ---------- context menu ---------- */
const menuIcons: Record<string, React.ReactNode> = {
  ruler: <><path d="M1 4H16M1 2V6M16 2V6" stroke="#555" strokeWidth="1.200" /><rect x="1" y="9" width="15" height="5" fill="#f0b03a" stroke="#8f5c10" /><path d="M4 9V11M7 9V11M10 9V11M13 9V11" stroke="#8f5c10" /></>,
  makePart: <><path d="M1 2H12V16H1Z" fill="#e9edf3" stroke="#54627a" /><Cube x={4} y={8} w={5} h={5} d={2.500} k="#2c5594" f="#cfe0f8" r="#8db2ea" /><Burst x={13} y={4} r={4} /></>,
  makeComps: <><Cube x={1} y={2} w={5} h={5} d={2} f="#d8e9f7" r="#8fc6ea" k="#2f6da0" sw={1} /><Cube x={1} y={9} w={5} h={5} d={2} f="#aed7f2" r="#8fc6ea" k="#2f6da0" sw={1} /><Cube x={8} y={9} w={5} h={5} d={2} f="#e8eef3" r="#b9c4cd" k="#555" sw={1} /><Burst x={13} y={4} r={4} /></>,
  check: <path d="M2.500 9L7 13L15 5" stroke="#333" strokeWidth="2.400" />,
  find: <><circle cx="6.500" cy="6.500" r="5.500" fill="#eef4f8" stroke="#666" strokeWidth="1.200" /><path d="M10 10L16 16" stroke="#444" strokeWidth="2.800" /><path d="M4.500 2V11L6.500 9.200L8 12L9.200 11.500L8 8.500H10.500Z" fill="#fff" stroke="#333" strokeWidth=".8" /></>,
};
type Entry = null | { text: string; icon?: string; key?: string; hot?: boolean; off?: boolean };
const entries: Entry[] = [
  { text: 'Repeat Measure', icon: 'ruler' },
  null,
  { text: 'Measure', icon: 'ruler', key: 'M' },
  { text: 'Make Part', icon: 'makePart', hot: true },
  { text: 'Make Components', icon: 'makeComps' },
  { text: 'Create Note' },
  null,
  { text: 'Visibility', icon: 'check' },
  { text: 'Show All', off: true },
  { text: 'Hide Others' },
  { text: 'Export Object', icon: 'check' },
  null,
  { text: 'Expand All Children' },
  { text: 'Collapse All Children' },
  { text: 'Find in Window', icon: 'find', key: 'END' },
  null,
  { text: 'Properties' },
  null,
  { text: 'Help Topics...' },
];

/* ---------- 3D model ---------- */
const LINE = '#7a2c12';
const BLUE = '#2a86e8';
const LEFT = 'M812 388L757 660Q757 663 761 665L991 737Q997 738 998 734L1042 532Q1039 525 1032 530L1024 542L1004 543Z';
const RIGHT = 'M1030 532L1219 520L1228 517Q1236 514 1236 528L1192 725L1188 727L1005 668.500Z';
const TOP = 'M811 384L1033 370L1047 369L1228 516L1239 525L1238 528L1220 529L1042 541L1004 543L811 388Z';
const Model = () => (
  <svg width="1261" height="583" viewBox="445 177 1261 583" fill="none">
    <defs>
      <filter id="grain" x="0" y="0" width="100%" height="100%">
        <feTurbulence type="fractalNoise" baseFrequency="0.2 0.045" numOctaves="3" seed="4" />
        <feColorMatrix values="0 0 0 0 .38  0 0 0 0 .23  0 0 0 0 .16  3.2 0 0 0 -1.35" />
      </filter>
      <filter id="grainTop" x="0" y="0" width="100%" height="100%">
        <feTurbulence type="fractalNoise" baseFrequency="0.014 0.3" numOctaves="3" seed="9" />
        <feColorMatrix values="0 0 0 0 .55  0 0 0 0 .33  0 0 0 0 .24  2.6 0 0 0 -1.1" />
      </filter>
      <linearGradient id="topFill" x1="0" y1="0" x2="1" y2="1"><stop offset="0" stopColor="#cc967c" /><stop offset=".45" stopColor="#d09b81" /><stop offset="1" stopColor="#dcaa90" /></linearGradient>
      <linearGradient id="leftFill" x1="0" y1="0" x2=".4" y2="1"><stop offset="0" stopColor="#c49078" /><stop offset=".5" stopColor="#c79278" /><stop offset="1" stopColor="#cc967b" /></linearGradient>
      <linearGradient id="rightFill" x1=".3" y1="0" x2=".45" y2="1"><stop offset="0" stopColor="#a67963" /><stop offset=".3" stopColor="#c28e74" /><stop offset="1" stopColor="#cc967b" /></linearGradient>
      <clipPath id="cl"><path d={LEFT} /></clipPath>
      <clipPath id="cr"><path d={RIGHT} /></clipPath>
      <clipPath id="ct"><path d={TOP} /></clipPath>
    </defs>
    <path d="M1010 371Q1009 365 1014 365Q1018 365 1020 369" fill="#c08a70" stroke={BLUE} strokeWidth="4" />
    <path d="M815 384L816 379Q820 375 826 382" fill="#c68f74" stroke={LINE} />
    <path d={RIGHT} fill="url(#rightFill)" />
    <g clipPath="url(#cr)"><rect x="900" y="400" width="500" height="500" filter="url(#grain)" opacity=".34" transform="rotate(8 1100 600)" /></g>
    <path d={LEFT} fill="url(#leftFill)" />
    <g clipPath="url(#cl)"><rect x="650" y="300" width="500" height="560" filter="url(#grain)" opacity=".34" transform="rotate(8 880 560)" /></g>
    <path d={TOP} fill="url(#topFill)" />
    <g clipPath="url(#ct)"><rect x="700" y="150" width="700" height="600" filter="url(#grainTop)" opacity=".28" transform="rotate(38 1020 450)" /></g>
    <path d="M1024 543L1032 530Q1038 525 1042 532L1040 542L1030 560Z" fill="#c58d72" />
    <g stroke={LINE} strokeWidth="1">
      <path d="M812 390L757 660Q757 663 761 665L991 737Q997 738 998 734L1041 534Q1040 526 1033 529L1024 541L1004 543L811 388L811 384L1033 370L1047 369L1228 516" />
      <path d="M811 384L1005 540L1024 539M1038 540L995 735M1041 541L1220 530M1041 538L1221 527M1235 525L1240 527L1236 530M1013 671L1189 727L1192 725L1233 530" />
      <path d="M870 414L872 414L893 431L891 431ZM959 487L961 487L982 504L980 504Z" />
      <path d="M854 484L857 485L850 524L846 523ZM842 544L845 545L837 583L833 582Z" />
      <path d="M860 488L867 490L866 494L859 492ZM874 493L882 494L881 498L873 496ZM889 497L896 499L895 503L888 501Z" />
    </g>
    <g stroke={BLUE} strokeLinecap="round" strokeWidth="3">
      <path d="M1065 402L1087 419M1154 475L1177 492" />
      <path d="M1224 524L1228 518Q1233 513 1237 519L1234 532" strokeWidth="4" />
      <path d="M1233 532L1193 723" strokeDasharray="10 5" />
      <path d="M1192 722Q1191 727 1187 726" strokeWidth="4" />
      <path d="M1020 673L1186 726" strokeDasharray="8 6" strokeWidth="2.400" />
    </g>
    <path d="M1065 401L1087 418M1154 474L1177 491" stroke={LINE} strokeWidth=".6" strokeDasharray="4 3" />
    <path d="M1226 530L1229 520Q1232 516 1234 520L1232 532Z" fill="#b98067" />
  </svg>
);

const tabs: [string, number][] = [
  ['Sketch', 69], ['Annotate', 85], ['Inspect', 74], ['Tools', 58], ['CAM', 57], ['Manage', 78], ['View', 56],
  ['Environments', 113], ['Get Started', 102], ['Vault', 56], ['Autodesk A360', 127],
];

export default function App() {
  return (
    <Window>
      <Global />
      <TitleBar>
        <Slot $w={24} $mt={1}><Logo /></Slot>
        <Slot $w={20} $ml={14} $mt={4}><NewDoc /></Slot>
        <Slot $w={7} $ml={9} $mt={11}><Caret color="#ccc" /></Slot>
        <Slot $w={20} $ml={9} $mt={3}><OpenDoc /></Slot>
        <Slot $w={19} $ml={11} $mt={3}><Save /></Slot>
        <Slot $w={18} $ml={10} $mt={6}><Undo /></Slot>
        <Slot $w={7} $ml={10} $mt={11}><Caret color="#ccc" /></Slot>
        <Slot $w={18} $ml={11} $mt={6}><Redo /></Slot>
        <Slot $w={7} $ml={10} $mt={11}><Caret color="#999" /></Slot>
        <Slot $w={17} $ml={11} $mt={5}><Home /></Slot>
        <Slot $w={20} $ml={11} $mt={3}><Return /></Slot>
        <Slot $w={7} $ml={10} $mt={11}><Caret color="#ccc" /></Slot>
        <Slot $w={20} $ml={10} $mt={2}><SelectTool /></Slot>
        <Slot $w={7} $ml={5} $mt={11}><Caret color="#ccc" /></Slot>
        <Slot $w={20} $ml={11} $mt={3}><Links /></Slot>
        <Slot $w={20} $ml={10} $mt={3}><Sphere /></Slot>
        <Combo $ml={5}><ComboText $pl={5}>Wood (Oak)</ComboText><Caret color="#4c4c4c" w={9} /></Combo>
        <Slot $w={20} $ml={4} $mt={3}><Wheel /></Slot>
        <Combo $ml={6}><OakCube /><ComboText $pl={4}>White Oak</ComboText><Caret color="#4c4c4c" w={9} /></Combo>
        <Slot $w={20} $ml={4} $mt={3}><WheelAdjust /></Slot>
        <Slot $w={20} $ml={10} $mt={3}><WheelClear /></Slot>
        <Slot $w={20} $ml={13} $mt={1}><Fx>f<sub>x</sub></Fx></Slot>
        <Slot $w={16} $ml={8} $mt={5}><Plus c="#868686" s={17} w={2.4} /></Slot>
        <Slot $w={11} $ml={12} $mt={9}><More /></Slot>
        <DocTitle>Standur - MasterPart.ipt</DocTitle>
        <Slot $w={6} $ml={12} $mt={8}><Icon s={6} h={10}><path d="M0 0L6 5L0 10Z" fill="#e0e0e0" /></Icon></Slot>
        <SearchBox>Search Help &amp; Commands...</SearchBox>
        <Slot $w={20} $ml={4} $mt={3}><Dish /></Slot>
        <Slot $w={20} $ml={9} $mt={3}><Star /></Slot>
        <Slot $w={20} $ml={11} $mt={3}><User /></Slot>
        <UserName>aro36</UserName>
      </TitleBar>

      <TabBar>
        <Tab $w={53} $kind="file">File</Tab>
        <Tab $w={88} $kind="active">3D Model</Tab>
        {tabs.map(([t, w]) => <Tab key={t} $w={w}>{t}</Tab>)}
        <Slot $w={17} $ml={26} $mt={9}>
          <Icon s={17} h={9}><rect width="17" height="9" rx="2" fill="#e3e3e3" /><path d="M5 6.500L8.500 2.500L12 6.500Z" fill="#444" /></Icon>
        </Slot>
        <Slot $w={7} $ml={7} $mt={12}><Caret color="#ddd" /></Slot>
      </TabBar>

      <Ribbon>
        <Group $w={98}>
          <GroupBody $pl={11}>
            <Big $w={72}><StartSketch /><BigLabel $mt={8}>Start<br />2D Sketch</BigLabel></Big>
            <BesideArrow><Caret w={6} /></BesideArrow>
          </GroupBody>
          <GroupLabel $shift={-3}>Sketch</GroupLabel>
        </Group>

        <Group $w={380}>
          <GroupBody $pl={1}>
            <Big $w={60}><Extrude /><BigLabel>Extrude</BigLabel></Big>
            <Big $w={58}><Revolve /><BigLabel>Revolve</BigLabel></Big>
            <Column $w={83} $ml={6}>
              <Cmd icon="Sweep" label="Sweep" /><Cmd icon="Loft" label="Loft" /><Cmd icon="Coil" label="Coil" />
            </Column>
            <Column $w={90}>
              <Cmd icon="Emboss" label="Emboss" gap={6} /><Cmd icon="Derive" label="Derive" gap={6} /><Cmd icon="Rib" label="Rib" />
            </Column>
            <Column $w={80}>
              <Cmd icon="Decal" label="Decal" /><Cmd icon="Import" label="Import" gap={6} />
            </Column>
          </GroupBody>
          <GroupLabel>Create</GroupLabel>
        </Group>

        <Group $w={452}>
          <GroupBody $pl={6}>
            <Big $w={41}><Hole /><BigLabel $mt={8}>Hole</BigLabel></Big>
            <Big $w={55}><Fillet /><BigLabel $mt={8}>Fillet</BigLabel></Big>
            <Column $w={95} $ml={1}>
              <Cmd icon="Chamfer" label="Chamfer" /><Cmd icon="Shell" label="Shell" /><Cmd icon="Draft" label="Draft" />
            </Column>
            <Column $w={140}>
              <Cmd icon="Thread" label="Thread" /><Cmd icon="Combine" label="Combine" /><Cmd icon="Thicken" label="Thicken/ Offset" />
            </Column>
            <Column $w={110}>
              <Cmd icon="Split" label="Split" /><Cmd icon="Direct" label="Direct" /><Cmd icon="DeleteFace" label="Delete Face" />
            </Column>
          </GroupBody>
          <GroupLabel $shift={-2}>Modify <Caret w={9} /></GroupLabel>
        </Group>

        <Group $w={80}>
          <GroupBody><Big $w={79}><ShapeGen /><BigLabel $mt={7}>Shape<br />Generator</BigLabel></Big></GroupBody>
          <GroupLabel>Explore</GroupLabel>
        </Group>

        <Group $w={156}>
          <GroupBody $pl={6}>
            <Big $w={56}><Plane /><BigLabel $mt={7}>Plane</BigLabel><Caret w={6} /></Big>
            <Column $w={85} $ml={9}>
              <Cmd icon="Axis" label="Axis" arrow={5} gap={6} /><Cmd icon="Point" label="Point" arrow={5} gap={6} /><Cmd icon="UCS" label="UCS" gap={6} />
            </Column>
          </GroupBody>
          <GroupLabel $shift={2}>Work Features</GroupLabel>
        </Group>

        <Group $w={68}>
          <GroupBody>
            <ToolGrid $cols={2} $ml={3}>
              <Tool><Sm n="PatRect" /></Tool><Tool><Sm n="Mirror" /></Tool>
              <Tool><Sm n="PatCirc" /></Tool><span />
              <Tool><Sm n="PatSketch" /></Tool>
            </ToolGrid>
          </GroupBody>
          <GroupLabel>Pattern</GroupLabel>
        </Group>

        <Group $w={147}>
          <GroupBody>
            <Big $w={56}><FreeBox /><BigLabel $mt={7}>Box</BigLabel><Caret w={6} /></Big>
            <Column $w={80} $ml={3}>
              <Cmd icon="Face" label="Face" gap={6} /><Cmd icon="Convert" label="Convert" gap={6} />
            </Column>
          </GroupBody>
          <GroupLabel $shift={1}>Create Freeform</GroupLabel>
        </Group>

        <Group $w={246}>
          <GroupBody $pl={7}>
            <Column $w={79}>
              <Cmd icon="Stitch" label="Stitch" gap={6} /><Cmd icon="Patch" label="Patch" gap={6} /><Cmd icon="Sculpt" label="Sculpt" gap={6} />
            </Column>
            <Column $w={122}>
              <Cmd icon="Ruled" label="Ruled Surface" gap={6} /><Cmd icon="Trim" label="Trim" gap={6} /><Cmd icon="Extend" label="Extend" gap={6} />
            </Column>
            <ToolGrid $cols={1} $ml={4}>
              <Tool><Sm n="Thick2" /></Tool><Tool><Sm n="Replace" /></Tool><Tool><Sm n="Copy" /></Tool>
            </ToolGrid>
          </GroupBody>
          <GroupLabel>Surface</GroupLabel>
        </Group>

        <Group $w={79}>
          <GroupBody><Big $w={84}><Stress /><BigLabel $mt={7}>Stress<br />Analysis</BigLabel></Big></GroupBody>
          <GroupLabel $shift={4}>Simulation</GroupLabel>
        </Group>
      </Ribbon>

      <Workspace>
        <Browser>
          <BrowserHead>
            <BrowserTab>Model<Icon s={9}><path d="M.5 1L8.500 9M8.500 1L.5 9" stroke="#444" /></Icon></BrowserTab>
            <Slot $w={8} $ml={6}><Plus c="#eee" s={8} w={2} /></Slot>
            <HeadTools>
              <Icon s={13}><circle cx="5.500" cy="5" r="4.300" stroke="#ddd" strokeWidth="1.200" /><path d="M8.500 8.500L12.500 12.500" stroke="#ddd" strokeWidth="1.300" /></Icon>
              <Icon s={13} h={10}><path d="M0 .5H12M0 5H12M0 9.500H12" stroke="#ddd" strokeWidth="1.300" /></Icon>
            </HeadTools>
          </BrowserHead>
          <BrowserBody>
            <Tree>
              <TreeRow><TreeIcon><Icon>{treeIcons.part}</Icon></TreeIcon><TreeText>Standur - MasterPart.ipt</TreeText></TreeRow>
              <TreeRow>
                <Rail chevron="open" />
                <TreeIcon><Icon>{treeIcons.bodies}</Icon></TreeIcon><TreeText>Solid Bodies(7)</TreeText>
              </TreeRow>
              {bodies.map((b, i) => (
                <TreeRow key={b}>
                  <Rail dash={false} />
                  <Rail chevron="closed" to={i === bodies.length - 1 ? 12 : 25} />
                  <TreeIcon><Icon>{treeIcons.body}</Icon></TreeIcon>
                  <TreeText $selected={i === 0}>{b}</TreeText>
                </TreeRow>
              ))}
              {features.map(([icon, name, open], i) => (
                <TreeRow key={i}>
                  <Rail chevron={open ? 'closed' : undefined} />
                  <TreeIcon><Icon>{treeIcons[icon]}</Icon></TreeIcon><TreeText>{name}</TreeText>
                </TreeRow>
              ))}
            </Tree>
            <ScrollBar>
              <ScrollUp><Icon s={10} h={6}><path d="M.5 5.500L5 1L9.500 5.500" stroke="#8c8c8c" strokeWidth="1.800" /></Icon></ScrollUp>
            </ScrollBar>
          </BrowserBody>
        </Browser>
        <Canvas><Model /></Canvas>
      </Workspace>

      <Menu>
        {entries.map((e, i) => e === null ? <Divider key={i} /> : (
          <MenuItem key={i} $hot={e.hot} $off={e.off}>
            <MenuIcon>{e.icon && <Icon s={17}>{menuIcons[e.icon]}</Icon>}</MenuIcon>
            <MenuText>{e.text}</MenuText>
            {e.key && <Shortcut>{e.key}</Shortcut>}
          </MenuItem>
        ))}
      </Menu>
    </Window>
  );
}
